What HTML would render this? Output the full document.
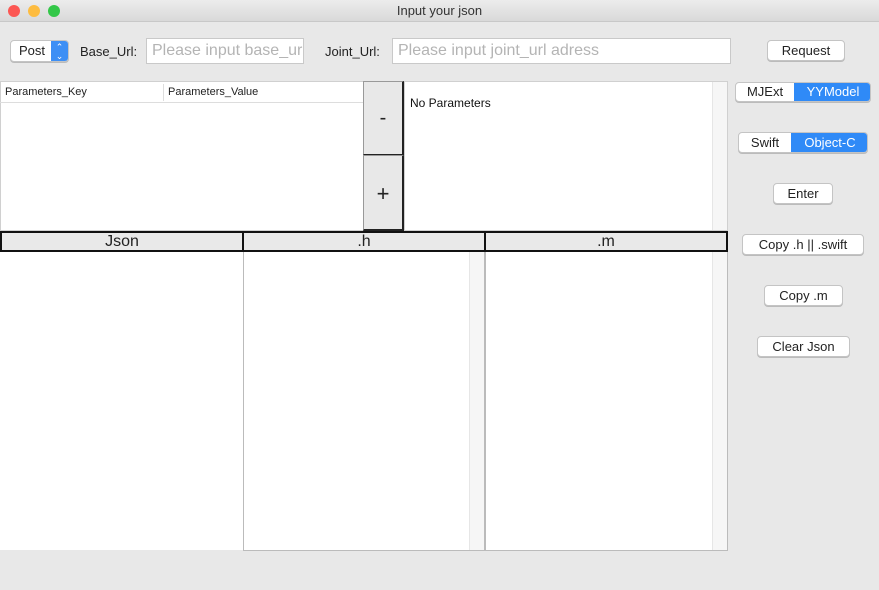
<!DOCTYPE html>
<html><head><meta charset="utf-8"><style>
*{box-sizing:border-box;margin:0;padding:0}
body{width:879px;height:590px;background:#e8e8e8;font-family:"Liberation Sans",sans-serif;font-size:13px;color:#222;position:relative;overflow:hidden}
.a{position:absolute}
.btn{position:absolute;background:#fff;border:1px solid #c4c4c4;border-radius:4px;text-align:center;line-height:20px;font-size:13px;box-shadow:0 1px 0 #bbb}
.inp{position:absolute;background:#fff;border:1px solid #c9c9c9;color:#b4b4b4;font-size:16px;padding-left:5px;line-height:24px;white-space:nowrap;overflow:hidden}
.hd{position:absolute;top:231px;height:21px;background:#e9e9e9;border:2px solid #111;text-align:center;font-size:16px;line-height:17px}
.sb{position:absolute;background:#f6f6f6;border-left:1px solid #e6e6e6}
</style></head><body>
<div class="a" style="left:0;top:0;width:879px;height:22px;background:linear-gradient(#ececec,#d9d9d9);border-bottom:1px solid #c8c8c8;text-align:center;line-height:22px;font-size:13px;color:#333">Input your json</div>
<div class="a" style="left:8px;top:5px;width:12px;height:12px;border-radius:50%;background:#fc5753"></div>
<div class="a" style="left:28px;top:5px;width:12px;height:12px;border-radius:50%;background:#fdbc40"></div>
<div class="a" style="left:48px;top:5px;width:12px;height:12px;border-radius:50%;background:#33c748"></div>

<div class="btn" style="left:10px;top:40px;width:59px;height:22px;text-align:left;padding-left:8px;overflow:hidden">Post<div class="a" style="right:0;top:0;width:17px;height:22px;background:#3d8ff5;color:#fff;font-size:9px;line-height:9px;text-align:center;padding-top:2px">&#8963;<br>&#8964;</div></div>
<div class="a" style="left:80px;top:44px">Base_Url:</div>
<div class="inp" style="left:146px;top:38px;width:158px;height:26px">Please input base_url</div>
<div class="a" style="left:325px;top:44px">Joint_Url:</div>
<div class="inp" style="left:392px;top:38px;width:339px;height:26px">Please input joint_url adress</div>
<div class="btn" style="left:767px;top:40px;width:78px;height:21px">Request</div>

<div class="a" style="left:0;top:81px;width:364px;height:150px;background:#fff;border:1px solid #d0d0d0"></div>
<div class="a" style="left:0;top:102px;width:363px;height:1px;background:#ddd"></div>
<div class="a" style="left:163px;top:84px;width:1px;height:17px;background:#ddd"></div>
<div class="a" style="left:5px;top:86px;font-size:11px">Parameters_Key</div>
<div class="a" style="left:168px;top:86px;font-size:11px">Parameters_Value</div>
<div class="a" style="left:363px;top:81px;width:41px;height:74px;background:#e8e8e8;border:1px solid #999;border-right:2px solid #222;border-bottom:1px solid #222;text-align:center;line-height:72px;font-size:20px">-</div>
<div class="a" style="left:363px;top:155px;width:41px;height:76px;background:#e8e8e8;border:1px solid #999;border-right:2px solid #222;border-bottom:2px solid #222;text-align:center;line-height:76px;font-size:22px">+</div>
<div class="a" style="left:404px;top:81px;width:324px;height:150px;background:#fff;border:1px solid #d0d0d0"></div>
<div class="sb" style="left:712px;top:82px;width:15px;height:148px"></div>
<div class="a" style="left:410px;top:96px;font-size:12px;color:#111">No Parameters</div>

<div class="a" style="left:735px;top:82px;width:136px;height:20px;border:1px solid #c4c4c4;border-radius:4px;overflow:hidden;background:#fff;box-shadow:0 1px 0 #bbb"><div class="a" style="left:0;top:0;width:58px;height:18px;text-align:center;line-height:18px">MJExt</div><div class="a" style="left:58px;top:0;width:78px;height:18px;background:#2f8af7;color:#fff;text-align:center;line-height:18px">YYModel</div></div>
<div class="a" style="left:738px;top:132px;width:130px;height:21px;border:1px solid #c4c4c4;border-radius:4px;overflow:hidden;background:#fff;box-shadow:0 1px 0 #bbb"><div class="a" style="left:0;top:0;width:52px;height:19px;text-align:center;line-height:19px">Swift</div><div class="a" style="left:52px;top:0;width:78px;height:19px;background:#2f8af7;color:#fff;text-align:center;line-height:19px">Object-C</div></div>
<div class="btn" style="left:773px;top:183px;width:60px;height:21px">Enter</div>
<div class="btn" style="left:742px;top:234px;width:122px;height:21px">Copy .h || .swift</div>
<div class="btn" style="left:764px;top:285px;width:79px;height:21px">Copy .m</div>
<div class="btn" style="left:757px;top:336px;width:93px;height:21px">Clear Json</div>

<div class="hd" style="left:0;width:244px">Json</div>
<div class="hd" style="left:242px;width:244px">.h</div>
<div class="hd" style="left:484px;width:244px">.m</div>
<div class="a" style="left:0;top:252px;width:243px;height:298px;background:#fff"></div>
<div class="a" style="left:243px;top:252px;width:242px;height:299px;background:#fff;border:1px solid #bbb;border-top:none"></div>
<div class="sb" style="left:469px;top:252px;width:15px;height:298px"></div>
<div class="a" style="left:485px;top:252px;width:243px;height:299px;background:#fff;border:1px solid #bbb;border-top:none"></div>
<div class="sb" style="left:712px;top:252px;width:15px;height:298px"></div>
</body></html>
